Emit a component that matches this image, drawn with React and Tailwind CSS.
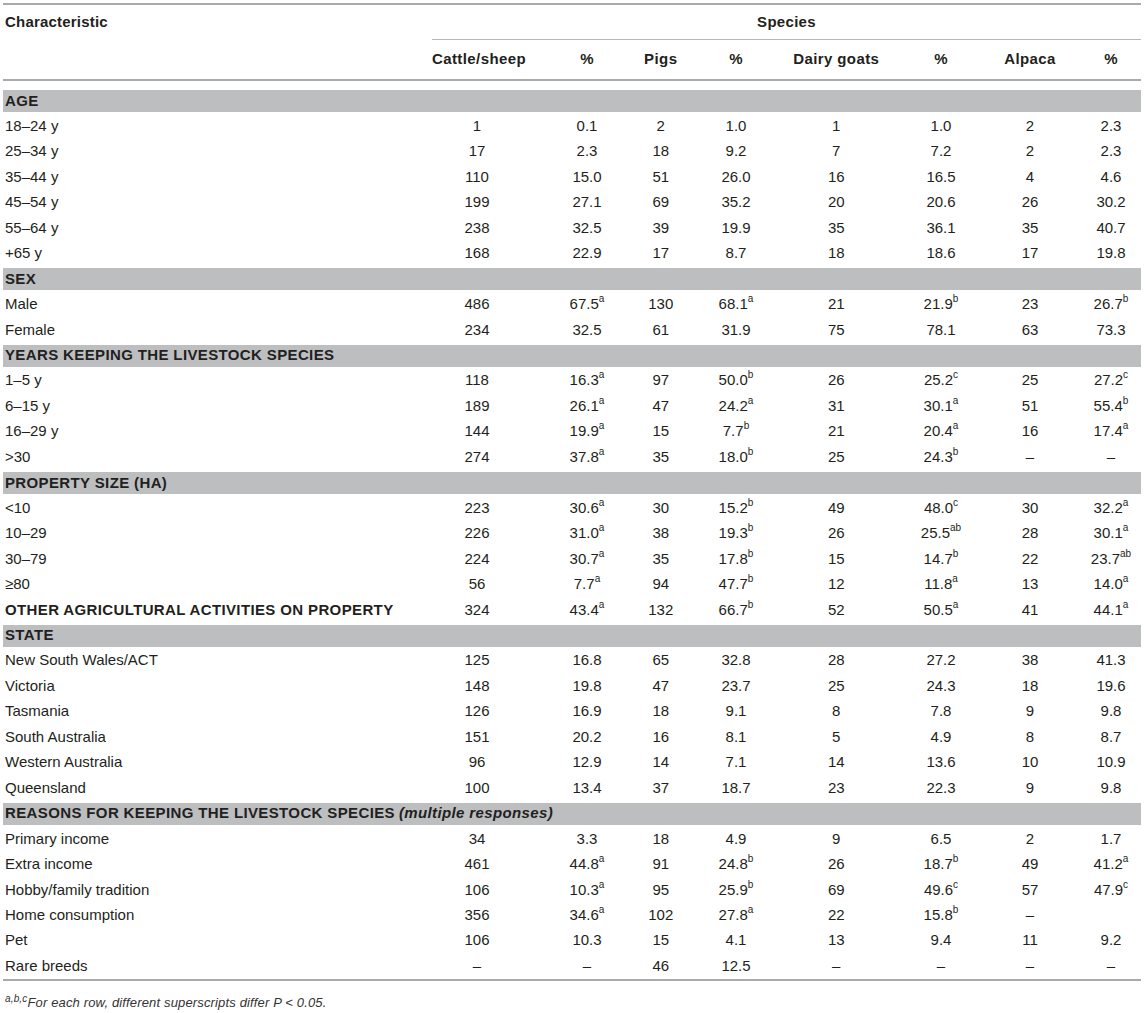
import React from 'react';

// column widths + horizontal nudges so each value sits under its header
const cols = [
  { w: 'w-[100px]', pad: 'pr-[10px]' },
  { w: 'w-[91.5px]', pad: 'pl-[18.5px]' },
  { w: 'w-[74.5px]', pad: '' },
  { w: 'w-[88px]', pad: 'pr-[12px]' },
  { w: 'w-[102.5px]', pad: 'pr-[2px]' },
  { w: 'w-[97px]', pad: 'pl-[8px]' },
  { w: 'w-[85px]', pad: 'pl-[4px]' },
  { w: 'w-[70.5px]', pad: 'pl-[10.5px]' },
];

const heads = ['Cattle/sheep', '%', 'Pigs', '%', 'Dairy goats', '%', 'Alpaca', '%'];

const rows = [
  { section: 'AGE' },
  ['18–24 y', '1', '0.1', '2', '1.0', '1', '1.0', '2', '2.3'],
  ['25–34 y', '17', '2.3', '18', '9.2', '7', '7.2', '2', '2.3'],
  ['35–44 y', '110', '15.0', '51', '26.0', '16', '16.5', '4', '4.6'],
  ['45–54 y', '199', '27.1', '69', '35.2', '20', '20.6', '26', '30.2'],
  ['55–64 y', '238', '32.5', '39', '19.9', '35', '36.1', '35', '40.7'],
  ['+65 y', '168', '22.9', '17', '8.7', '18', '18.6', '17', '19.8'],
  { section: 'SEX' },
  ['Male', '486', '67.5^a', '130', '68.1^a', '21', '21.9^b', '23', '26.7^b'],
  ['Female', '234', '32.5', '61', '31.9', '75', '78.1', '63', '73.3'],
  { section: 'YEARS KEEPING THE LIVESTOCK SPECIES' },
  ['1–5 y', '118', '16.3^a', '97', '50.0^b', '26', '25.2^c', '25', '27.2^c'],
  ['6–15 y', '189', '26.1^a', '47', '24.2^a', '31', '30.1^a', '51', '55.4^b'],
  ['16–29 y', '144', '19.9^a', '15', '7.7^b', '21', '20.4^a', '16', '17.4^a'],
  ['>30', '274', '37.8^a', '35', '18.0^b', '25', '24.3^b', '–', '–'],
  { section: 'PROPERTY SIZE (HA)' },
  ['<10', '223', '30.6^a', '30', '15.2^b', '49', '48.0^c', '30', '32.2^a'],
  ['10–29', '226', '31.0^a', '38', '19.3^b', '26', '25.5^ab', '28', '30.1^a'],
  ['30–79', '224', '30.7^a', '35', '17.8^b', '15', '14.7^b', '22', '23.7^ab'],
  ['≥80', '56', '7.7^a', '94', '47.7^b', '12', '11.8^a', '13', '14.0^a'],
  { bold: true, cells: ['OTHER AGRICULTURAL ACTIVITIES ON PROPERTY', '324', '43.4^a', '132', '66.7^b', '52', '50.5^a', '41', '44.1^a'] },
  { section: 'STATE' },
  ['New South Wales/ACT', '125', '16.8', '65', '32.8', '28', '27.2', '38', '41.3'],
  ['Victoria', '148', '19.8', '47', '23.7', '25', '24.3', '18', '19.6'],
  ['Tasmania', '126', '16.9', '18', '9.1', '8', '7.8', '9', '9.8'],
  ['South Australia', '151', '20.2', '16', '8.1', '5', '4.9', '8', '8.7'],
  ['Western Australia', '96', '12.9', '14', '7.1', '14', '13.6', '10', '10.9'],
  ['Queensland', '100', '13.4', '37', '18.7', '23', '22.3', '9', '9.8'],
  { section: 'REASONS FOR KEEPING THE LIVESTOCK SPECIES', note: '(multiple responses)' },
  ['Primary income', '34', '3.3', '18', '4.9', '9', '6.5', '2', '1.7'],
  ['Extra income', '461', '44.8^a', '91', '24.8^b', '26', '18.7^b', '49', '41.2^a'],
  ['Hobby/family tradition', '106', '10.3^a', '95', '25.9^b', '69', '49.6^c', '57', '47.9^c'],
  ['Home consumption', '356', '34.6^a', '102', '27.8^a', '22', '15.8^b', '–', ''],
  ['Pet', '106', '10.3', '15', '4.1', '13', '9.4', '11', '9.2'],
  ['Rare breeds', '–', '–', '46', '12.5', '–', '–', '–', '–'],
];

function Value({ text }) {
  const [num, sup] = text.split('^');
  return (
    <span>
      {num}
      {sup && <sup className="text-[10px] -top-[0.7em]">{sup}</sup>}
    </span>
  );
}

function DataRow({ cells, bold }) {
  return (
    <div className="flex items-center h-[25.46px]">
      <div className={`w-[429px] pl-[2px] ${bold ? 'font-bold tracking-[0.37px]' : ''}`}>{cells[0]}</div>
      {cells.slice(1).map((c, i) => (
        <div key={i} className={`${cols[i].w} ${cols[i].pad} text-center`}>
          <Value text={c} />
        </div>
      ))}
    </div>
  );
}

function SectionRow({ title, note }) {
  return (
    <div className="h-[25.46px] pt-[2px]">
      <div className="h-[22px] bg-[#bcbec0] flex items-center pl-[2px] font-bold tracking-[0.37px]">
        {title}
        {note && <span className="italic ml-[4px]">{note}</span>}
      </div>
    </div>
  );
}

export default function App() {
  return (
    <div className="bg-white min-h-[1013px] pt-[3px] text-[15px] text-[#231f20]" style={{ fontFamily: '"Liberation Sans", Arial, sans-serif' }}>
      <div className="ml-[3px] w-[1138px]">
        {/* header */}
        <div className="border-t-2 border-b-2 border-[#a8aaad] flex">
          <div className="w-[429px] pl-[2px] font-bold tracking-[0.2px] h-[35px] flex items-center">Characteristic</div>
          <div className="flex-1">
            <div className="h-[35px] flex items-center justify-center font-bold tracking-[0.3px] border-b border-[#b5b7ba]">Species</div>
            <div className="h-[39px] flex items-center font-bold tracking-[0.4px]">
              {heads.map((h, i) => (
                <div key={i} className={`${cols[i].w} ${cols[i].pad} text-center`}>{h}</div>
              ))}
            </div>
          </div>
        </div>

        {/* body */}
        <div className="mt-[7px] border-b-2 border-[#a8aaad]">
          {rows.map((r, i) => {
            if (r.section) return <SectionRow key={i} title={r.section} note={r.note} />;
            if (r.cells) return <DataRow key={i} cells={r.cells} bold={r.bold} />;
            return <DataRow key={i} cells={r} />;
          })}
        </div>

        <p className="mt-[12px] pl-[2px] italic text-[13px] tracking-[0.15px] text-[#333]">
          <sup className="text-[10px]">a,b,c</sup>For each row, different superscripts differ P &lt; 0.05.
        </p>
      </div>
    </div>
  );
}
